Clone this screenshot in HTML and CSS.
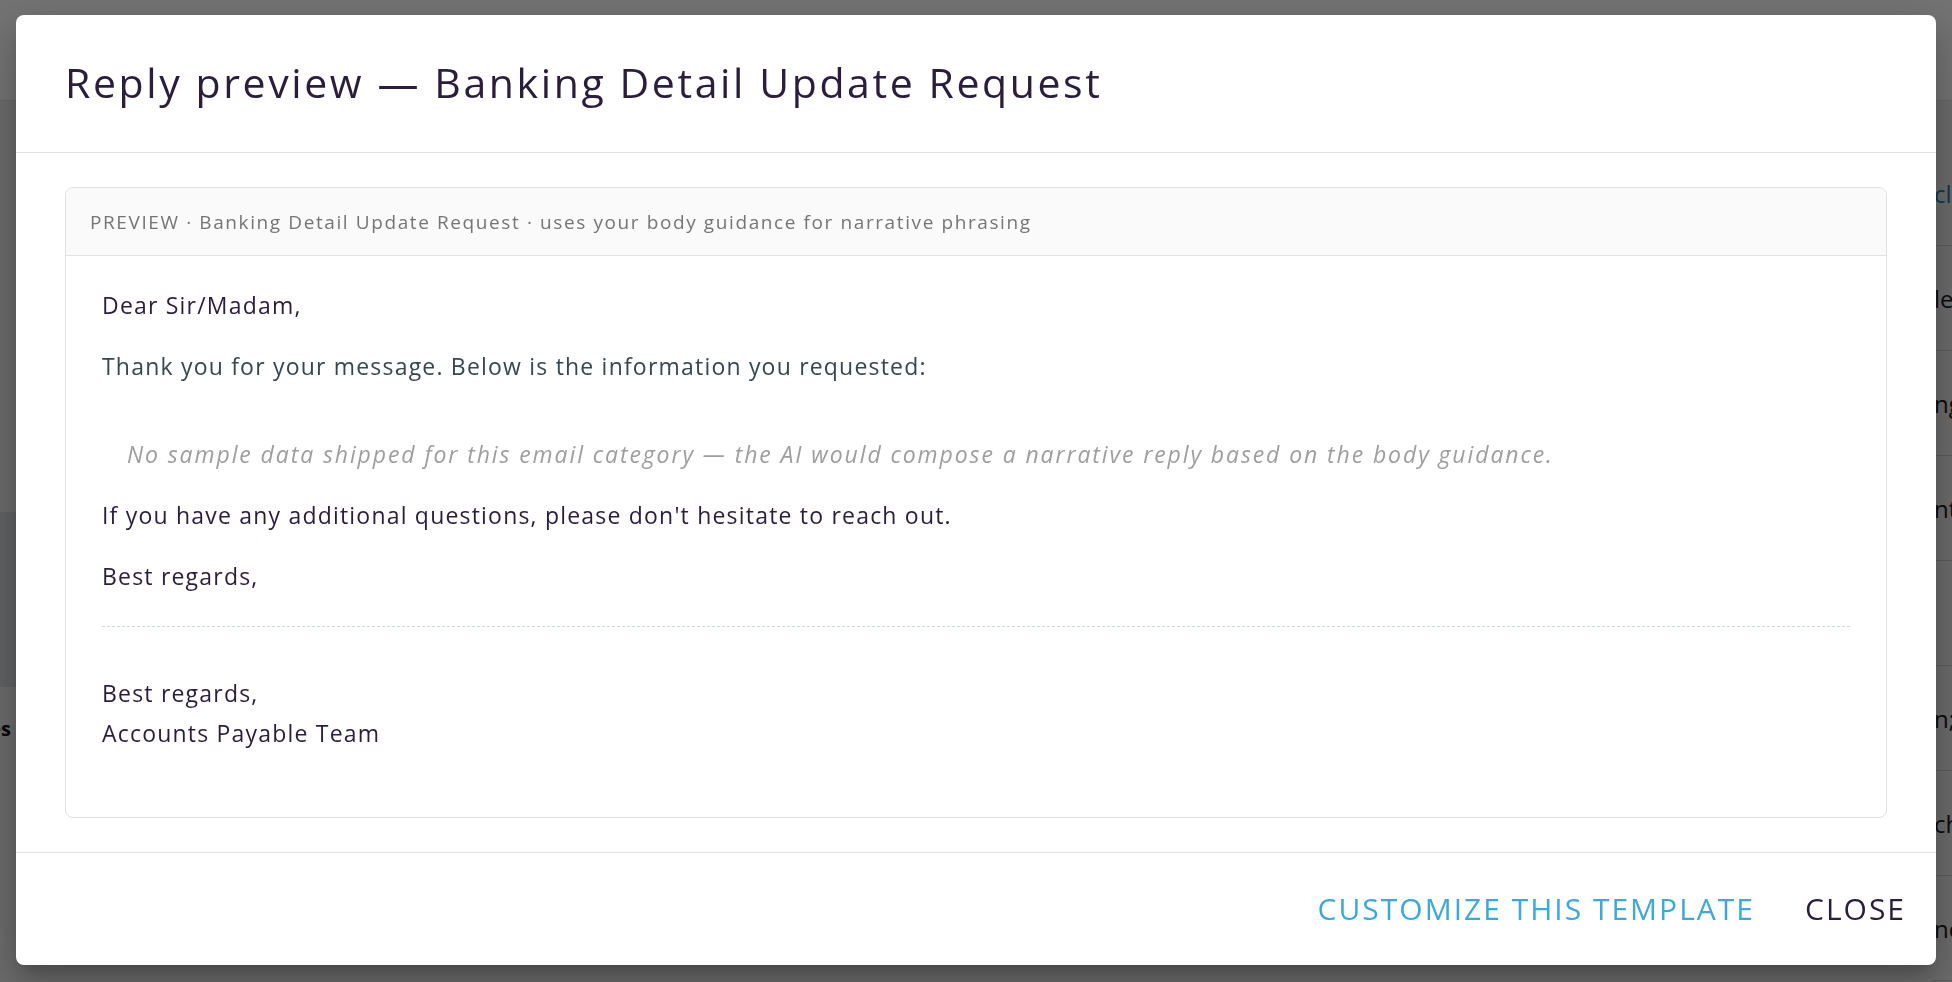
FILE: index.html
```html
<!DOCTYPE html>
<html lang="en">
<head>
    <meta charset="UTF-8">
    <title>Reply preview</title>
    <link rel="stylesheet" href="styles.css">
</head>
<body>
    <div class="app">
        <header class="app-bar"></header>
        <div class="app-main">
            <aside class="app-side">
                <div class="side-panel"></div>
                <div class="side-label">Rules</div>
            </aside>
            <section class="app-content">
                <div class="rule-list">
                    <div class="rule-row link">click</div>
                    <div class="rule-row">ledger</div>
                    <div class="rule-row">ngs</div>
                    <div class="rule-row">nt</div>
                    <div class="rule-row"></div>
                    <div class="rule-row">n;</div>
                    <div class="rule-row">ch</div>
                    <div class="rule-row">nce</div>
                </div>
            </section>
        </div>
    </div>

    <div class="backdrop"></div>

    <div class="dialog-wrap">
        <div class="dialog">
            <h2 class="dialog-title">Reply preview — Banking Detail Update Request</h2>

            <div class="dialog-content">
                <div class="preview-card">
                    <div class="preview-head">PREVIEW · Banking Detail Update Request · uses your body guidance for narrative phrasing</div>
                    <div class="preview-body">
                        <p>Dear Sir/Madam,</p>
                        <p class="intro">Thank you for your message. Below is the information you requested:</p>
                        <p class="placeholder">No sample data shipped for this email category — the AI would compose a narrative reply based on the body guidance.</p>
                        <p>If you have any additional questions, please don't hesitate to reach out.</p>
                        <p>Best regards,</p>
                        <hr class="sig-rule">
                        <div class="signature">Best regards,<br>Accounts Payable Team</div>
                    </div>
                </div>
            </div>

            <div class="dialog-actions">
                <button class="btn btn-primary">Customize this template</button>
                <button class="btn">Close</button>
            </div>
        </div>
    </div>
</body>
</html>
```

FILE: styles.css
```css
html, body {
    margin: 0;
    height: 100%;
    overflow: hidden;
}
body {
    font-family: "Open Sans", "Liberation Sans", sans-serif;
    color: #2b1d3c;
    background-color: #eeeeee;
}

/* page underneath the dialog */
.app {
    height: 100%;
    display: flex;
    flex-direction: column;
}
.app-bar {
    height: 100px;
    background-color: #ffffff;
    border-bottom: 1px solid #dddddd;
}
.app-main {
    flex: 1;
    display: flex;
}
.app-side {
    width: 16px;
    display: flex;
    flex-direction: column;
    padding-top: 411px;
}
.side-panel {
    height: 175px;
    background-color: #d3d8db;
}
.side-label {
    margin-top: 28px;
    width: 11px;
    overflow: hidden;
    white-space: nowrap;
    direction: rtl;
    font-weight: bold;
    font-size: 20px;
    color: #111111;
}
.app-content {
    flex: 1;
    display: flex;
    justify-content: flex-end;
}
.rule-list {
    width: 20px;
    padding-top: 40px;
    overflow: hidden;
}
.rule-row {
    height: 104px;
    border-bottom: 1px solid #cccccc;
    display: flex;
    align-items: center;
    padding-left: 2px;
    font-size: 24px;
    white-space: nowrap;
    color: #1a1a1a;
}
.rule-row.link {
    color: #1f7fb8;
}

.backdrop {
    position: fixed;
    inset: 0;
    background-color: rgba(0, 0, 0, 0.55);
}

/* dialog */
.dialog-wrap {
    position: fixed;
    inset: 0;
    display: flex;
    justify-content: center;
    align-items: flex-start;
    padding-top: 15px;
}
.dialog {
    width: 1920px;
    background-color: #ffffff;
    border-radius: 8px;
    box-shadow: 0 11px 15px -7px rgba(0,0,0,0.2), 0 24px 38px 3px rgba(0,0,0,0.14), 0 9px 46px 8px rgba(0,0,0,0.12);
    display: flex;
    flex-direction: column;
}
.dialog-title {
    margin: 0;
    padding: 44px 49px 47px;
    font-size: 41px;
    line-height: 46px;
    letter-spacing: 2.6px;
    font-weight: normal;
    color: #2b1d3c;
    border-bottom: 1px solid #e0e0e0;
}
.dialog-content {
    padding: 34px 49px;
}
.preview-card {
    border: 1px solid #e0e0e0;
    border-radius: 8px;
    overflow: hidden;
}
.preview-head {
    background-color: #fafafa;
    border-bottom: 1px solid #e0e0e0;
    padding: 22px 24px 21px;
    font-size: 19px;
    line-height: 24px;
    letter-spacing: 1.6px;
    color: #757575;
}
.preview-body {
    padding: 29px 36px 64px;
    font-size: 23px;
    line-height: 40px;
    letter-spacing: 1.2px;
}
.preview-body p {
    margin: 0 0 21px;
}
.preview-body .intro {
    color: #37474f;
}
.preview-body .placeholder {
    padding: 27px 25px 0;
    font-style: italic;
    letter-spacing: 1.9px;
    color: #9e9e9e;
}
.sig-rule {
    border: 0;
    border-top: 1px dashed #cfd8dc;
    margin: 30px 0 46px;
}
.signature {
    line-height: 40px;
}

.dialog-actions {
    border-top: 1px solid #e0e0e0;
    display: flex;
    justify-content: flex-end;
    align-items: center;
    gap: 18px;
    padding: 28px 14px 28px 16px;
}
.btn {
    font-family: inherit;
    font-size: 30px;
    line-height: 36px;
    letter-spacing: 2px;
    text-transform: uppercase;
    background: none;
    border: 0;
    padding: 10px 16px;
    color: #2b1d3c;
    cursor: pointer;
}
.btn-primary {
    color: #3ea8d6;
}
```
